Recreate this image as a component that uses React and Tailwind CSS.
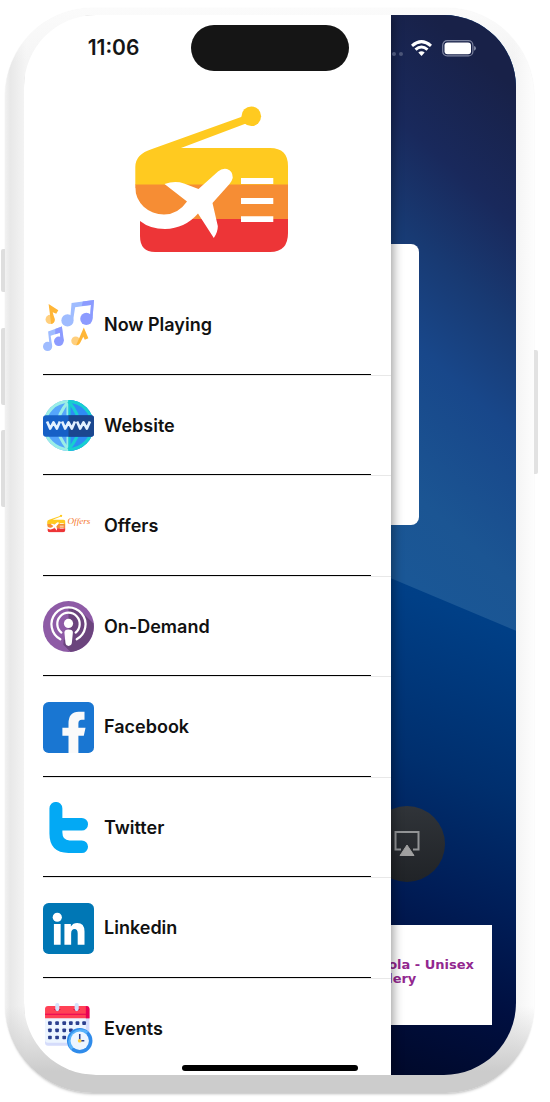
import React from 'react';

const NotesIcon = () => (
    <svg viewBox="0 0 50 50" className="size-[51px] shrink-0" aria-hidden="true">
        <path d="M28 3 L50 0 L48.500 19 L46 19 L47 5 L31.500 7 L29.500 20 L26.500 20 Z" fill="#9fbcff" />
        <path d="M39 1.500 L50 0 L48.500 18 L46 18 L47 5 L38 6 Z" fill="#8c9bff" />
        <circle cx="24" cy="20" r="6" fill="#9fbcff" />
        <circle cx="42.500" cy="18.500" r="6" fill="#8c9bff" />
        <path d="M5 31 L18.500 26 L20 40 L17.500 41 L16.500 32 L7.500 35 L9 45 L6.500 45 Z" fill="#9fbcff" />
        <path d="M12 28.500 L18.500 26 L20.500 40 L17.500 41 L16.500 32 L12 33.500 Z" fill="#8c9bff" />
        <circle cx="4.500" cy="45.500" r="4.500" fill="#9fbcff" />
        <circle cx="15.500" cy="40.500" r="4.700" fill="#8c9bff" />
        <circle cx="7" cy="19" r="4.500" fill="#ffcf7d" />
        <path d="M5.500 4 L15 10 L13 13.500 L9.500 12 L11.500 19 A4.500 4.500 0 0 1 8 23.500 Z" fill="#ffb637" />
        <circle cx="32" cy="40" r="4.300" fill="#ffcf7d" />
        <path d="M40 27 L44.500 37.500 L41 39 L39.500 36 L36.500 42 Q35 45 32.500 44.300 Z" fill="#ffb637" />
    </svg>
);

const GlobeIcon = () => (
    <svg viewBox="0 0 50 50" className="size-[51px] shrink-0" aria-hidden="true">
        <circle cx="25" cy="25" r="25" fill="#55a5fb" />
        <path d="M25 0 A25 25 0 0 1 25 50 Z" fill="#2f8cf5" />
        <g fill="none" strokeWidth="3">
            <g stroke="#9aeee6">
                <path d="M25 1.500 A23.500 23.500 0 0 0 25 48.500" />
                <path d="M25 1.500 Q4 25 25 48.500" />
                <path d="M24 0 V50" strokeWidth="2" />
            </g>
            <g stroke="#17cfd0">
                <path d="M25 1.500 A23.500 23.500 0 0 1 25 48.500" />
                <path d="M25 1.500 Q46 25 25 48.500" />
                <path d="M26 0 V50" strokeWidth="2" />
            </g>
        </g>
        <rect y="15" width="50" height="21" rx="3" fill="#1660c6" />
        <path d="M25 15 H47 Q50 15 50 18 V33 Q50 36 47 36 H25 Z" fill="#1b478f" />
        <g fill="none" stroke="#e3f1ff" strokeWidth="2.600" strokeLinejoin="round">
            <path d="M4 21 L7 28 L10.300 22 L13.600 28 L16.600 21" />
            <path d="M18.700 21 L21.700 28 L25 22 L28.300 28 L31.300 21" />
            <path d="M33.400 21 L36.400 28 L39.700 22 L43 28 L46 21" />
        </g>
    </svg>
);

const RadioShape = () => (
    <>
        <path d="M152 149 L242.500 116.500 L246 123.500 L181 148 H270 Q288 148 288 166 V185 H135.300 V167 Q135.300 154 152 149 Z" fill="#ffca20" />
        <circle cx="251.300" cy="116.300" r="9.800" fill="#ffca20" />
        <path d="M135.300 184.500 H288 V219.500 H135.300 Z" fill="#f68d34" />
        <path d="M140 219 H288 V233 Q288 252 270 252 H155 Q140 252 140 236 Z" fill="#ed3537" />
        <path
            d="M133 188 H135.300 A28.800 26.500 0 0 0 164 214.500 Q178 214.500 187 201.500 L164.500 184 Q175 180.500 184 183.500 L198.500 189 L218 171.500 Q222 168 227 169 Q233 171 232.700 178 Q232 181 229.500 184 L212.500 203 L217.800 226 Q218 232 213.800 238 L198 213.500 Q185 228.500 165 229 Q150 229 140 221 L133 222 Z"
            fill="#fff"
        />
        <path d="M241 178 H273.300 V184 H241 Z M241 198 H273.300 V204 H241 Z M241 216.300 H273.300 V222 H241 Z" fill="#fff" />
    </>
);

const OffersIcon = () => (
    <svg viewBox="0 0 50 50" className="size-[51px] shrink-0" aria-hidden="true">
        <svg x="4" y="13" width="18" height="18" viewBox="135 106 153 147">
            <RadioShape />
        </svg>
        <text x="24" y="23" fontSize="9" fill="#f4762a" className="font-['Liberation_Serif'] font-normal italic">Offers</text>
    </svg>
);

const PodcastIcon = () => (
    <svg viewBox="0 0 50 50" className="size-[51px] shrink-0" aria-hidden="true">
        <circle cx="25" cy="25" r="25" fill="#8e5ba6" />
        <path d="M37 10 L49.500 22 A25 25 0 0 1 27 50 L20 43 L21 30 Z" fill="#6b447d" />
        <circle cx="25" cy="22.500" r="16" fill="#8e5ba6" />
        <path d="M25 6 A16.500 16.500 0 0 1 33 37 L25 44 Z" fill="#6b447d" />
        <g fill="none" stroke="#fff" strokeWidth="2.200" strokeLinecap="round">
            <path d="M17 37.500 A16.700 16.700 0 1 1 33 37.500" />
            <path d="M18 31 A11 11 0 1 1 32 31" />
        </g>
        <circle cx="25" cy="22" r="4.500" fill="#fff" />
        <path d="M21 31 Q21 28 25 28 Q29.500 28 29.300 31 L28.300 41 Q28 44 25 44 Q22.300 44 22 41 Z" fill="#fff" />
    </svg>
);

const FacebookIcon = () => (
    <svg viewBox="0 0 50 50" className="size-[51px] shrink-0" aria-hidden="true">
        <rect width="50" height="50" rx="5.500" fill="#1976d2" />
        <path d="M25 50 V33 H19 V25.300 H25 V21 Q25 9.500 35 9.500 H40.700 V17.500 H38 Q34.700 17.500 34.700 21 V25.300 H41.700 L40 33 H34.700 V50 Z" fill="#fafafa" />
    </svg>
);

const TwitterIcon = () => (
    <svg viewBox="0 0 50 50" className="size-[51px] shrink-0" aria-hidden="true">
        <path d="M6.300 6.300 A6.300 6.300 0 0 1 19 6.300 V15.700 H38 A6.150 6.150 0 0 1 38 28 H19 V30 Q19 37.700 26 37.700 H38 A6.150 6.150 0 0 1 38 50 H25 Q6.300 50 6.300 31 Z" fill="#03a9f4" />
    </svg>
);

const LinkedinIcon = () => (
    <svg viewBox="0 0 50 50" className="size-[51px] shrink-0" aria-hidden="true">
        <rect width="50" height="50" rx="5.500" fill="#0077b5" />
        <circle cx="14" cy="14" r="4.500" fill="#fff" />
        <path d="M10.700 20.700 H17.300 V41 H10.700 Z" fill="#fff" />
        <path d="M21 20.700 H27.300 V23 Q29.500 19.700 33.500 19.700 Q40.700 19.700 40.700 28 V41 H34 V30 Q34 25.500 31 25.500 Q27.600 25.500 27.600 30 V41 H21 Z" fill="#fff" />
    </svg>
);

const dots = [
    [5, 18], [12, 18], [19, 18], [25.500, 18], [32, 18], [38.500, 18],
    [5, 25], [12, 25], [19, 25], [25.500, 25],
    [5, 32], [12, 32], [19, 32],
];

const CalendarIcon = () => (
    <svg viewBox="0 0 50 50" className="size-[51px] shrink-0" aria-hidden="true">
        <rect x="2" y="4" width="43.500" height="38" rx="3" fill="#d5dcfb" />
        <path d="M2 14 H42 V36 Q42 39 39 39 H5 Q2 39 2 36 Z" fill="#edf5ff" />
        <path d="M2 15 V6 Q2 3 5 3 H42.500 Q45.500 3 45.500 6 V15 Z" fill="#ff4155" />
        <path d="M42 3 Q45.500 3 45.500 6 V15 H42 Z M2 10.500 H45.500 V11.500 H2 Z" fill="#e80054" />
        <path d="M10.500 6 Q14 10 17.500 6 Z M29.500 6 Q33 10 36.500 6 Z" fill="#c8003f" />
        <rect x="12" y="0" width="4" height="8" rx="2" fill="#d5e2fb" />
        <rect x="31" y="0" width="4" height="8" rx="2" fill="#d5e2fb" />
        {dots.map(([x, y]) => (
            <rect key={`${x}-${y}`} x={x} y={y} width="3.600" height="3.600" rx=".8" fill="#2b3f8e" />
        ))}
        <circle cx="36" cy="37" r="12.500" fill="#2f8bea" />
        <path d="M27.500 46 A12.500 12.500 0 0 1 44.500 28 Z" fill="#58b2fb" />
        <circle cx="36" cy="37" r="9" fill="#edf5ff" />
        <path d="M36 30.500 V37 H40.500" fill="none" stroke="#2b3f8e" strokeWidth="1.500" />
        <circle cx="36" cy="37" r="1.800" fill="#ffcf3a" />
    </svg>
);

const menu = [
    { label: 'Now Playing', Icon: NotesIcon },
    { label: 'Website', Icon: GlobeIcon },
    { label: 'Offers', Icon: OffersIcon },
    { label: 'On-Demand', Icon: PodcastIcon },
    { label: 'Facebook', Icon: FacebookIcon },
    { label: 'Twitter', Icon: TwitterIcon },
    { label: 'Linkedin', Icon: LinkedinIcon },
    { label: 'Events', Icon: CalendarIcon },
];

const StatusBar = () => (
    <div className="col-start-1 row-start-1 z-20 self-start grid grid-cols-[1fr_auto_1fr] items-center pt-2.5">
        <span className="pl-3 text-center text-[21px] font-semibold text-[#151515]">11:06</span>
        <span className="h-[46px] w-[158px] rounded-full bg-[#151515]" />
        <div className="flex items-center justify-center pl-0.5">
            <span className="flex gap-[3px] pt-3 pr-2">
                <i className="size-1 rounded-xs bg-[#4b5578]" />
                <i className="size-1 rounded-xs bg-[#4b5578]" />
            </span>
            <svg viewBox="0 0 21 16" className="mr-2.5 h-4 w-[21px]" fill="none" stroke="#fff" strokeWidth="3" aria-hidden="true">
                <path d="M1 5.800 Q10.500 -2.500 20 5.800" />
                <path d="M4.500 9.600 Q10.500 4.300 16.500 9.600" />
                <path d="M10.500 16 L7.300 12.600 Q10.500 10 13.700 12.600 Z" fill="#fff" stroke="none" />
            </svg>
            <svg viewBox="0 0 34 17" className="h-[17px] w-[34px]" aria-hidden="true">
                <rect x=".7" y=".7" width="30.200" height="15.200" rx="4.500" fill="none" stroke="#7d84a0" strokeWidth="1.200" />
                <rect x="2.500" y="2.500" width="26.500" height="11.800" rx="3" fill="#fff" />
                <path d="M32 6 Q34 6.500 34 8.300 Q34 10 32 10.700 Z" fill="#7d84a0" />
            </svg>
        </div>
    </div>
);

const Player = () => (
    <section className="relative col-start-1 row-start-1 overflow-hidden rounded-l-[90px] bg-[linear-gradient(200deg,#00458e_40%,#003f86_50%,#002f6e_63%,#001d57_73%,#000f40_81%,#000828_90%)]">
        <div className="absolute inset-0 bg-[linear-gradient(222deg,#182148_5%,#19295c_14%,#183a73_21%,#18478a_28%,#1b5593_38%,#1a5796_44%)] [clip-path:polygon(0_0,100%_0,100%_58.1%,0_38.6%)]" />
        <div className="relative flex flex-col px-6 pt-[229px]">
            <div className="h-[281px] w-[298px] self-center rounded-lg bg-white" />
            <div className="mt-[281px] flex justify-end pr-[47px]">
                <button aria-label="AirPlay" className="flex size-[76px] items-center justify-center rounded-full bg-linear-to-b from-[#303439] to-[#202327]">
                    <svg viewBox="0 0 26 26" className="size-[26px]" aria-hidden="true">
                        <path d="M7 18.500 H1.500 V1 H24.500 V18.500 H19" fill="none" stroke="#929496" strokeWidth="2" />
                        <path d="M13 14 L20 24.500 H6 Z" fill="#a0a0a0" stroke="#a0a0a0" strokeLinejoin="round" />
                    </svg>
                </button>
            </div>
            <div className="mt-[43px] flex h-[100px] items-center justify-end bg-white pr-[18px] pb-1.5">
                <p className="font-['DejaVu_Sans',sans-serif] text-[13px] leading-[14px] font-bold text-[#92278f]">
                    ola - Unisex<br />lery
                </p>
            </div>
        </div>
    </section>
);

const Drawer = () => (
    <nav className="col-start-1 row-start-1 z-10 w-[74.6%] bg-white pt-[91px] shadow-[2px_0_10px_rgba(0,0,0,0.4)]">
        <svg viewBox="135 106 153 147" className="mx-auto h-[147px] w-[153px] translate-x-1" role="img" aria-label="Radio">
            <RadioShape />
        </svg>
        <ul className="mt-[22px] -mb-1 grid h-[804px] grid-rows-8 pl-[19px]">
            {menu.map(({ label, Icon }) => (
                <li key={label} className="flex border-b border-[#e8e8e8]">
                    <a href="#" className="mr-5 flex flex-1 items-center gap-2.5 border-b border-black pt-0.5 text-lg font-semibold text-[#111]">
                        <Icon />
                        {label}
                    </a>
                </li>
            ))}
        </ul>
    </nav>
);

const App = () => {
    return (
        <div className="flex bg-white pt-2 pr-3 pb-2 pl-px font-[Inter,sans-serif]">
            <div className="flex w-1 flex-col pt-[241px]">
                <span className="h-[43px] rounded-l-xs bg-[#dedede]" />
                <span className="mt-9 h-[77px] rounded-l-xs bg-[#dedede]" />
                <span className="mt-[25px] h-[77px] rounded-l-xs bg-[#dedede]" />
            </div>
            <div className="min-w-0 flex-1 rounded-[88px] bg-[linear-gradient(180deg,#fbfbfb,transparent_5%,transparent_92%,#cccccc_98%),linear-gradient(90deg,#f2f2f2,#e8e8e8_1%,#f5f5f5_4%,#f3f3f3_96%,#fdfdfd)] pt-[7px] pr-[18px] pb-[18px] pl-[19px] shadow-[0_3px_3px_-2px_#bbbbbb,0_0_1px_#e8e8e8]">
                <main className="grid overflow-hidden rounded-[72px]">
                    <Player />
                    <Drawer />
                    <StatusBar />
                    <span className="z-20 col-start-1 row-start-1 mb-1 h-1.5 w-44 self-end justify-self-center rounded-full bg-black" />
                </main>
            </div>
            <div className="w-1 pt-[342px]">
                <span className="block h-[124px] rounded-r-xs bg-[#e2e2e2]" />
            </div>
        </div>
    );
};

export default App;
